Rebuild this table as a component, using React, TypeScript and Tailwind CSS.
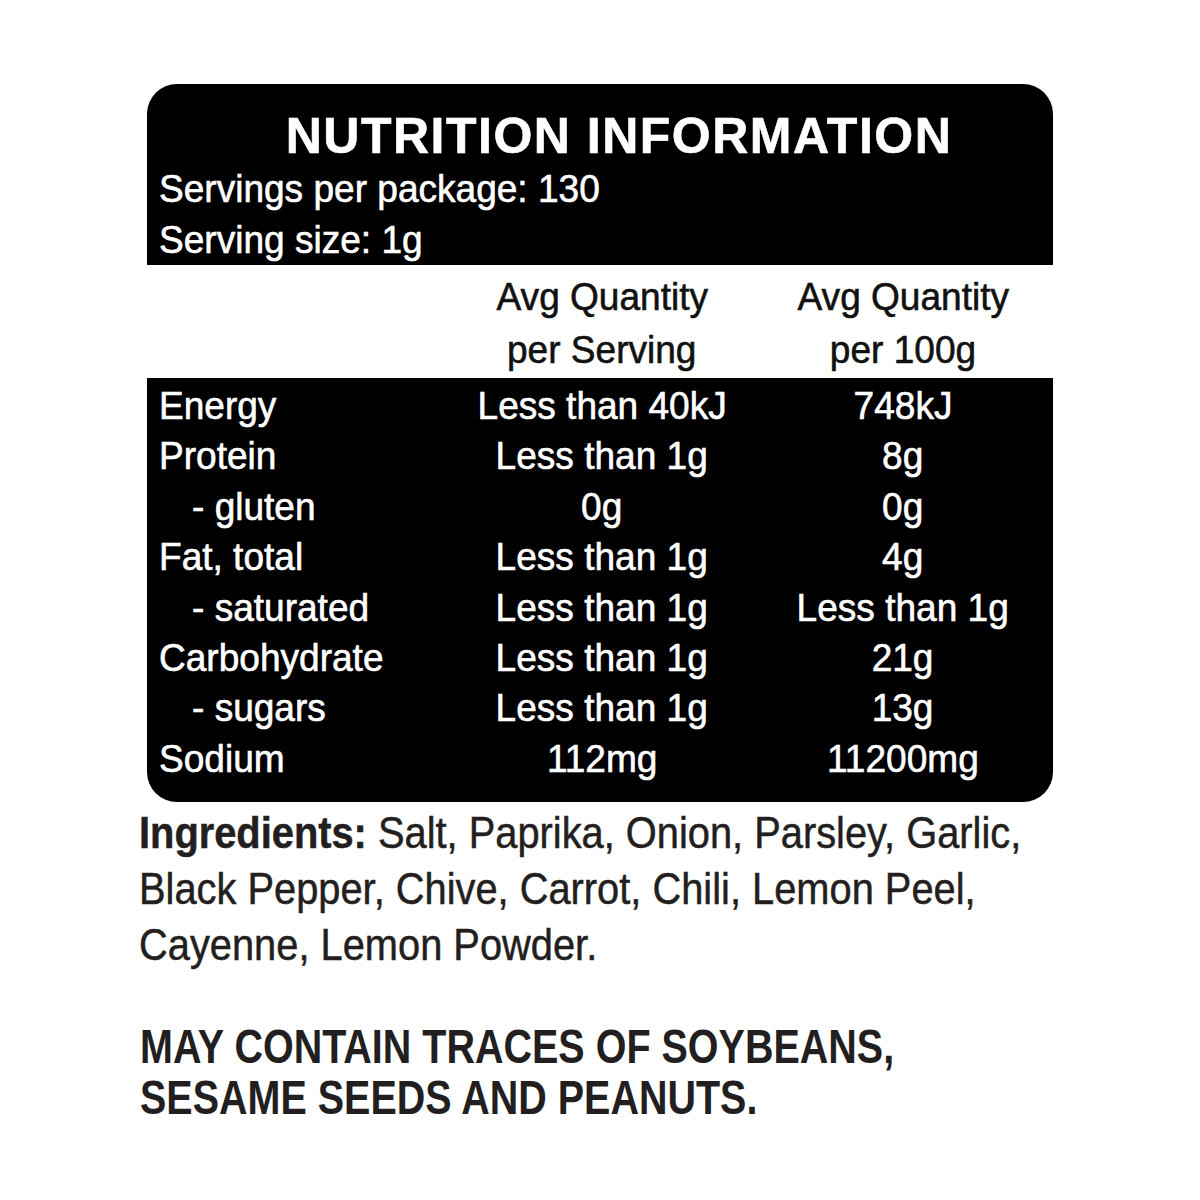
const rows: { label: string; indent?: boolean; serving: string; per100: string }[] = [
  { label: 'Energy', serving: 'Less than 40kJ', per100: '748kJ' },
  { label: 'Protein', serving: 'Less than 1g', per100: '8g' },
  { label: '- gluten', indent: true, serving: '0g', per100: '0g' },
  { label: 'Fat, total', serving: 'Less than 1g', per100: '4g' },
  { label: '- saturated', indent: true, serving: 'Less than 1g', per100: 'Less than 1g' },
  { label: 'Carbohydrate', serving: 'Less than 1g', per100: '21g' },
  { label: '- sugars', indent: true, serving: 'Less than 1g', per100: '13g' },
  { label: 'Sodium', serving: '112mg', per100: '11200mg' }
];

const Narrow = ({ children, center }: { children: React.ReactNode; center?: boolean }) => (
  <span
    className={
      center
        ? 'inline-block whitespace-nowrap origin-center scale-x-[0.95]'
        : 'inline-block whitespace-nowrap origin-left scale-x-[0.95]'
    }>
    {children}
  </span>
);

const App = () => {
  return (
    <div
      className="w-[1200px] h-[1200px] bg-white pt-[84px] pl-[147px]"
      style={{ fontFamily: '"Liberation Sans", Arial, sans-serif' }}>
      <div className="w-[906px] [-webkit-text-stroke:0.6px_currentcolor]">
        {/* header */}
        <div className="bg-black rounded-t-[30px] pt-[26px] pl-[12px] text-white">
          <div className="text-center pl-[26px] text-[50px] font-bold leading-[53px] tracking-[1.5px]">
            NUTRITION INFORMATION
          </div>
          <div className="text-[39px] leading-[51px]">
            <Narrow>Servings per package: 130</Narrow>
          </div>
          <div className="text-[39px] leading-[51px]">
            <Narrow>Serving size: 1g</Narrow>
          </div>
        </div>

        {/* column headings */}
        <div className="bg-white pt-[5px] pb-[2px] pl-[12px] grid grid-cols-[292px_302px_300px] text-[39px] leading-[53px] text-[#111]">
          <div />
          <div className="text-center">
            <Narrow center>Avg Quantity</Narrow>
            <br />
            <Narrow center>per Serving</Narrow>
          </div>
          <div className="text-center">
            <Narrow center>Avg Quantity</Narrow>
            <br />
            <Narrow center>per 100g</Narrow>
          </div>
        </div>

        {/* values */}
        <div className="bg-black rounded-b-[30px] pt-[3px] pb-[18px] pl-[12px] text-white text-[39px] leading-[50.4px]">
          {rows.map((r) => (
            <div key={r.label} className="grid grid-cols-[292px_302px_300px]">
              <div className={r.indent ? 'pl-[33px]' : ''}>
                <Narrow>{r.label}</Narrow>
              </div>
              <div className="text-center">
                <Narrow center>{r.serving}</Narrow>
              </div>
              <div className="text-center">
                <Narrow center>{r.per100}</Narrow>
              </div>
            </div>
          ))}
        </div>
      </div>

      <div className="ml-[-8px] mt-[3px] text-[44px] leading-[56px] text-[#231f20] whitespace-nowrap origin-left scale-x-[0.905] [-webkit-text-stroke:0.5px_currentcolor]">
        <span className="font-bold">Ingredients:</span> Salt, Paprika, Onion, Parsley, Garlic,
        <br />
        Black Pepper, Chive, Carrot, Chili, Lemon Peel,
        <br />
        Cayenne, Lemon Powder.
      </div>

      <div className="ml-[-7px] mt-[48px] text-[49px] leading-[51px] font-bold text-[#231f20] whitespace-nowrap origin-left scale-x-[0.806]">
        MAY CONTAIN TRACES OF SOYBEANS,
        <br />
        SESAME SEEDS AND PEANUTS.
      </div>
    </div>
  );
};

export default App;
